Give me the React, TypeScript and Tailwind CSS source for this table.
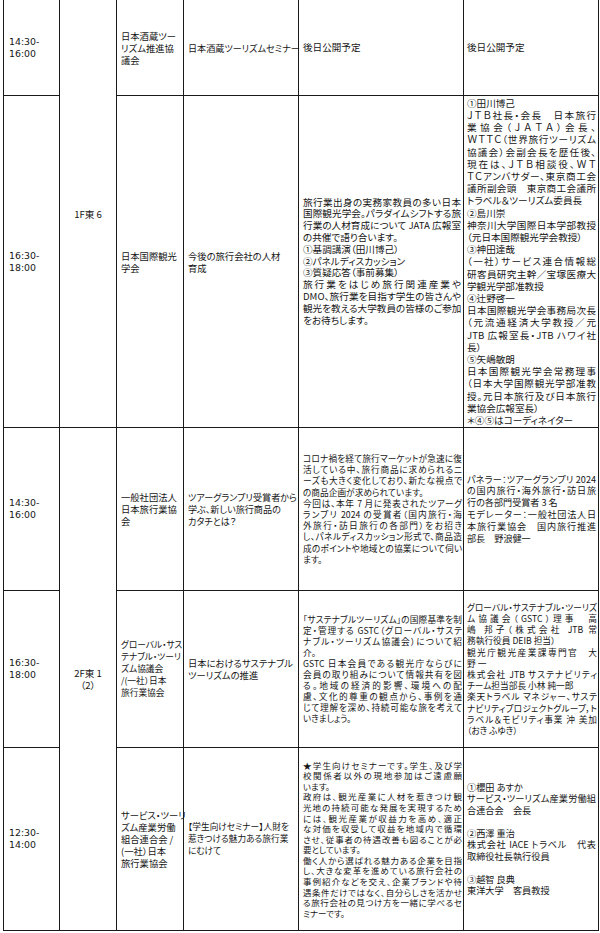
import React from "react";

// paragraphs -> lines; every line but the last of a paragraph is justified
type Paras = string[][];

function Lines({ paras, justify = true, className = "" }: { paras: Paras; justify?: boolean; className?: string }) {
  return (
    <div className={className}>
      {paras.map((p, pi) =>
        p.map((line, li) => {
          const last = li === p.length - 1;
          if (line === "") return <div key={`${pi}-${li}`} className="h-[1lh]" />;
          return (
            <div
              key={`${pi}-${li}`}
              className={`whitespace-nowrap ${justify && !last ? "[text-align-last:justify]" : ""}`}
            >
              {line}
            </div>
          );
        })
      )}
    </div>
  );
}

function Time({ from, to }: { from: string; to: string }) {
  return (
    <td className="border border-[#1a1a1a] pl-[5px] align-middle font-['DejaVu_Sans',sans-serif] text-[9.4px] leading-[12px]">
      <div>{from}-</div>
      <div>{to}</div>
    </td>
  );
}

const cellBase = "border border-[#1a1a1a] align-middle";

export default function App() {
  return (
    <div className="w-[600px] h-[933px] bg-white overflow-hidden">
      <table className="ml-[3px] -mt-px w-[595px] table-fixed border-collapse text-[9.6px] text-[#151515] font-['Noto_Sans_CJK_JP',sans-serif] [font-feature-settings:'palt']">
        <colgroup>
          <col className="w-[56px]" />
          <col className="w-[57px]" />
          <col className="w-[67px]" />
          <col className="w-[115px]" />
          <col className="w-[165px]" />
          <col className="w-[135px]" />
        </colgroup>
        <tbody>
          {/* 1F東6 */}
          <tr className="h-[96px]">
            <Time from="14:30" to="16:00" />
            <td rowSpan={2} className={`${cellBase} text-center leading-[12px]`}>
              1F東 6
            </td>
            <td className={`${cellBase} pl-[4px] pr-[2px]`}>
              <Lines justify={false} className="text-[9.3px] leading-[12px]" paras={[["日本酒蔵ツー", "リズム推進協", "議会"]]} />
            </td>
            <td className={`${cellBase} pl-[4px] pr-[2px]`}>
              <Lines justify={false} className="text-[9.1px] leading-[12px]" paras={[["日本酒蔵ツーリズムセミナー"]]} />
            </td>
            <td className={`${cellBase} pl-[4px] pr-[2px]`}>後日公開予定</td>
            <td className={`${cellBase} pl-[3px] pr-[2px]`}>後日公開予定</td>
          </tr>

          <tr className="h-[332px]">
            <Time from="16:30" to="18:00" />
            <td className={`${cellBase} pl-[4px] pr-[2px]`}>
              <Lines justify={false} className="text-[9.3px] leading-[12px]" paras={[["日本国際観光", "学会"]]} />
            </td>
            <td className={`${cellBase} pl-[4px] pr-[2px]`}>
              <Lines justify={false} className="text-[9.3px] leading-[12px]" paras={[["今後の旅行会社の人材", "育成"]]} />
            </td>
            <td className={`${cellBase} pl-[4px] pr-[2px]`}>
              <Lines
                className="leading-[11.8px]"
                paras={[
                  ["旅行業出身の実務家教員の多い日本", "国際観光学会。パラダイムシフトする旅", "行業の人材育成について JATA 広報室", "の共催で語り合います。"],
                  ["①基調講演（田川博己）"],
                  ["②パネルディスカッション"],
                  ["③質疑応答（事前募集）"],
                  ["旅行業をはじめ旅行関連産業や", "DMO、旅行業を目指す学生の皆さんや", "観光を教える大学教員の皆様のご参加", "をお待ちします。"],
                ]}
              />
            </td>
            <td className={`${cellBase} pl-[3px] pr-[2px]`}>
              <Lines
                className="leading-[12.2px]"
                paras={[
                  ["①田川博己"],
                  [
                    "ＪＴＢ社長・会長　日本旅行",
                    "業協会（ＪＡＴＡ）会長、",
                    "ＷＴＴＣ（世界旅行ツーリズム",
                    "協議会）会副会長を歴任後、",
                    "現在は、ＪＴＢ相談役、ＷＴ",
                    "ＴＣアンバサダー、東京商工会",
                    "議所副会頭　東京商工会議所",
                    "トラベル＆ツーリズム委員長",
                  ],
                  ["②島川崇"],
                  ["神奈川大学国際日本学部教授", "（元日本国際観光学会教授）"],
                  ["③神田達哉"],
                  ["（一社）サービス連合情報総", "研客員研究主幹／宝塚医療大", "学観光学部准教授"],
                  ["④辻野啓一"],
                  ["日本国際観光学会事務局次長", "（元流通経済大学教授／元", "JTB 広報室長・JTB ハワイ社", "長）"],
                  ["⑤矢嶋敏朗"],
                  ["日本国際観光学会常務理事", "（日本大学国際観光学部准教", "授。元日本旅行及び日本旅行", "業協会広報室長）"],
                  ["＊④⑤はコーディネイター"],
                ]}
              />
            </td>
          </tr>

          {/* 2F東1(2) */}
          <tr className="h-[163px]">
            <Time from="14:30" to="16:00" />
            <td rowSpan={3} className={`${cellBase} text-center leading-[12px]`}>
              <div>2F東 1</div>
              <div>（2）</div>
            </td>
            <td className={`${cellBase} pl-[4px] pr-[2px]`}>
              <Lines justify={false} className="text-[9.3px] leading-[12px]" paras={[["一般社団法人", "日本旅行業協", "会"]]} />
            </td>
            <td className={`${cellBase} pl-[4px] pr-[2px]`}>
              <Lines justify={false} className="text-[9.1px] leading-[12px]" paras={[["ツアーグランプリ受賞者から", "学ぶ、新しい旅行商品の", "カタチとは？"]]} />
            </td>
            <td className={`${cellBase} pl-[4px] pr-[1px]`}>
              <Lines
                className="text-[8.7px] leading-[11.2px]"
                paras={[
                  ["コロナ禍を経て旅行マーケットが急速に復", "活している中、旅行商品に求められるニ", "ーズも大きく変化しており、新たな視点で", "の商品企画が求められています。"],
                  ["今回は、本年 7 月に発表されたツアーグ", "ランプリ 2024 の受賞者（国内旅行・海", "外旅行・訪日旅行の各部門）をお招き", "し、パネルディスカッション形式で、商品造", "成のポイントや地域との協業について伺い", "ます。"],
                ]}
              />
            </td>
            <td className={`${cellBase} pl-[3px] pr-[2px]`}>
              <Lines
                className="text-[9.1px] leading-[11.8px]"
                paras={[
                  ["パネラー：ツアーグランプリ 2024", "の国内旅行・海外旅行・訪日旅", "行の各部門受賞者 3 名"],
                  ["モデレーター：一般社団法人日", "本旅行業協会　国内旅行推進", "部長　野浪健一"],
                ]}
              />
            </td>
          </tr>

          <tr className="h-[157px]">
            <Time from="16:30" to="18:00" />
            <td className={`${cellBase} pl-[4px] pr-[1px]`}>
              <Lines
                justify={false}
                className="text-[8.7px] leading-[12px]"
                paras={[["グローバル・サス", "テナブル・ツーリ", "ズム協議会", "/(一社）日本", "旅行業協会"]]}
              />
            </td>
            <td className={`${cellBase} pl-[4px] pr-[2px]`}>
              <Lines justify={false} className="text-[9.3px] leading-[12px]" paras={[["日本におけるサステナブル", "ツーリズムの推進"]]} />
            </td>
            <td className={`${cellBase} pl-[4px] pr-[1px]`}>
              <Lines
                className="text-[8.7px] leading-[11px]"
                paras={[
                  ["「サステナブルツーリズム」の国際基準を制", "定・管理する GSTC（グローバル・サステ", "ナブル・ツーリズム協議会）について紹", "介。"],
                  ["GSTC 日本会員である観光庁ならびに", "会員の取り組みについて情報共有を図", "る。地域の経済的影響、環境への配", "慮、文化的尊重の観点から、事例を通", "じて理解を深め、持続可能な旅を考えて", "いきましょう。"],
                ]}
              />
            </td>
            <td className={`${cellBase} pl-[3px] pr-[1px]`}>
              <Lines
                className="text-[8.7px] leading-[11.2px]"
                paras={[
                  ["グローバル・サステナブル・ツーリズ", "ム協議会（GSTC）理事　高", "嶋 邦子（株式会社 JTB 常", "務執行役員 DEIB 担当）"],
                  ["観光庁観光産業課専門官　大", "野 一"],
                  ["株式会社 JTB サステナビリティ", "チーム担当部長 小林 純一郎"],
                  ["楽天トラベル マネジャー、サステ", "ナビリティプロジェクトグループ，ト", "ラベル＆モビリティ事業 沖 美加", "（おき ふゆき）"],
                ]}
              />
            </td>
          </tr>

          <tr className="h-[183px]">
            <Time from="12:30" to="14:00" />
            <td className={`${cellBase} pl-[4px] pr-[2px]`}>
              <Lines
                justify={false}
                className="text-[9.3px] leading-[12px]"
                paras={[["サービス・ツーリ", "ズム産業労働", "組合連合会 /", "(一社）日本", "旅行業協会"]]}
              />
            </td>
            <td className={`${cellBase} pl-[4px] pr-[1px]`}>
              <Lines justify={false} className="text-[8.7px] leading-[12px]" paras={[["【学生向けセミナー】人財を", "惹きつける魅力ある旅行業", "にむけて"]]} />
            </td>
            <td className={`${cellBase} pl-[4px] pr-[1px]`}>
              <Lines
                className="text-[8.5px] leading-[10.6px]"
                paras={[
                  ["★学生向けセミナーです。学生、及び学", "校関係者以外の現地参加はご遠慮願", "います。"],
                  ["政府は、観光産業に人材を惹きつけ観", "光地の持続可能な発展を実現するため", "には、観光産業が収益力を高め、適正", "な対価を収受して収益を地域内で循環", "させ、従事者の待遇改善も図ることが必", "要としています。"],
                  ["働く人から選ばれる魅力ある企業を目指", "し、大きな変革を進めている旅行会社の", "事例紹介などを交え、企業ブランドや待", "遇条件だけではなく、自分らしさを活かせ", "る旅行会社の見つけ方を一緒に学べるセ", "ミナーです。"],
                ]}
              />
            </td>
            <td className={`${cellBase} pl-[3px] pr-[2px]`}>
              <Lines
                className="text-[9.2px] leading-[11.5px]"
                paras={[
                  ["①櫻田 あすか"],
                  ["サービス・ツーリズム産業労働組", "合連合会　会長"],
                  [""],
                  ["②西澤 重治"],
                  ["株式会社 IACE トラベル　代表", "取締役社長執行役員"],
                  [""],
                  ["③越智 良典"],
                  ["東洋大学　客員教授"],
                ]}
              />
            </td>
          </tr>
        </tbody>
      </table>
    </div>
  );
}
